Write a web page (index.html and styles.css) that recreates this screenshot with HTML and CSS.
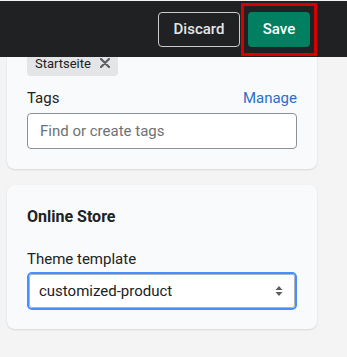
FILE: index.html
```html
<!DOCTYPE html>
<html lang="en">

<head>
    <meta charset="UTF-8">
    <meta name="viewport" content="width=device-width, initial-scale=1.0">
    <title>Product</title>
    <link rel="stylesheet" href="styles.css">
</head>

<body>
    <div class="topbar">
        <button class="btn btn-discard">Discard</button>
        <div class="highlight">
            <button class="btn btn-save">Save</button>
        </div>
    </div>

    <div class="page">
        <div class="card card-first">
            <div class="chips">
                <span class="chip">Startseite
                    <svg class="chip-x" width="10" height="10" viewBox="0 0 10 10">
                        <path d="M1 1 L9 9 M9 1 L1 9" stroke="#5c5f62" stroke-width="2.2" stroke-linecap="round" />
                    </svg>
                </span>
            </div>
            <div class="label-row">
                <span class="label">Tags</span>
                <a class="link" href="#">Manage</a>
            </div>
            <input class="field" type="text" placeholder="Find or create tags">
        </div>

        <div class="card">
            <h2 class="card-title">Online Store</h2>
            <div class="label-row">
                <span class="label">Theme template</span>
            </div>
            <div class="select-wrap">
                <div class="select">
                    <span>customized-product</span>
                    <svg width="10" height="14" viewBox="0 0 10 14">
                        <path d="M5 2 L8.5 6 H1.5 Z" fill="#5c5f62" />
                        <path d="M5 12 L8.5 8 H1.5 Z" fill="#5c5f62" />
                    </svg>
                </div>
            </div>
        </div>
    </div>
</body>

</html>
```

FILE: styles.css
```css
* {
    box-sizing: border-box;
}

body {
    margin: 0;
    background-color: #f4f4f4;
    font-family: Roboto, "Liberation Sans", sans-serif;
    color: #202223;
    overflow: hidden;
}

/* top save bar, lies over the scrolled page */
.topbar {
    position: fixed;
    top: 1px;
    left: 0;
    right: 0;
    height: 56px;
    background-color: #202123;
    display: flex;
    align-items: center;
    justify-content: flex-end;
    padding-right: 30px;
    z-index: 10;
}

.btn {
    font-family: Roboto, "Liberation Sans", sans-serif;
    font-size: 15px;
    font-weight: 500;
    height: 35px;
    border-radius: 4px;
    cursor: pointer;
}

.btn-discard {
    width: 82px;
    background: transparent;
    color: #e3e5e7;
    border: 1px solid #c9cccf;
    margin-right: 1px;
}

.highlight {
    border: 3px solid #d50000;
    padding: 6px 4px 6px 4px;
}

.btn-save {
    display: block;
    width: 62px;
    background-color: #008060;
    color: #ffffff;
    border: none;
}

.page {
    padding: 0 30px 0 7px;
}

.card {
    background-color: #f9fafb;
    border-radius: 8px;
    box-shadow: 0 1px 2px rgba(0, 0, 0, 0.12);
    padding: 20px 20px 19px 20px;
    margin-bottom: 16px;
}

.card-first {
    margin-top: 30px;
    padding-bottom: 20px;
    border-top-left-radius: 0;
    border-top-right-radius: 0;
}

.chips {
    display: flex;
}

.chip {
    display: inline-flex;
    align-items: center;
    gap: 9px;
    height: 26px;
    padding: 0 8px 0 8px;
    background-color: #e4e5e7;
    border-radius: 4px;
    font-size: 13px;
    color: #202223;
}

.label-row {
    display: flex;
    justify-content: space-between;
    align-items: center;
    height: 20px;
    font-size: 15px;
    margin-bottom: 4px;
}

.card-first .label-row {
    margin-top: 12px;
    margin-bottom: 5px;
}

.link {
    color: #2c6ecb;
    text-decoration: none;
}

.field {
    display: block;
    width: 100%;
    height: 36px;
    border: 1px solid #8c9196;
    border-radius: 4px;
    padding: 0 12px;
    font-family: Roboto, "Liberation Sans", sans-serif;
    font-size: 15px;
    background: #ffffff;
    outline: none;
}

.field::placeholder {
    color: #6d7175;
}

.card-title {
    margin: 0 0 20px 0;
    font-size: 16px;
    font-weight: 700;
    line-height: 24px;
}

.select-wrap {
    border: 2px solid #458fff;
    border-radius: 5px;
    margin-top: -1px;
}

.select {
    display: flex;
    align-items: center;
    justify-content: space-between;
    height: 34px;
    border: 1px solid #aeb4b9;
    border-radius: 3px;
    background: #ffffff;
    padding: 0 10px 0 9px;
    font-size: 15px;
}
```
